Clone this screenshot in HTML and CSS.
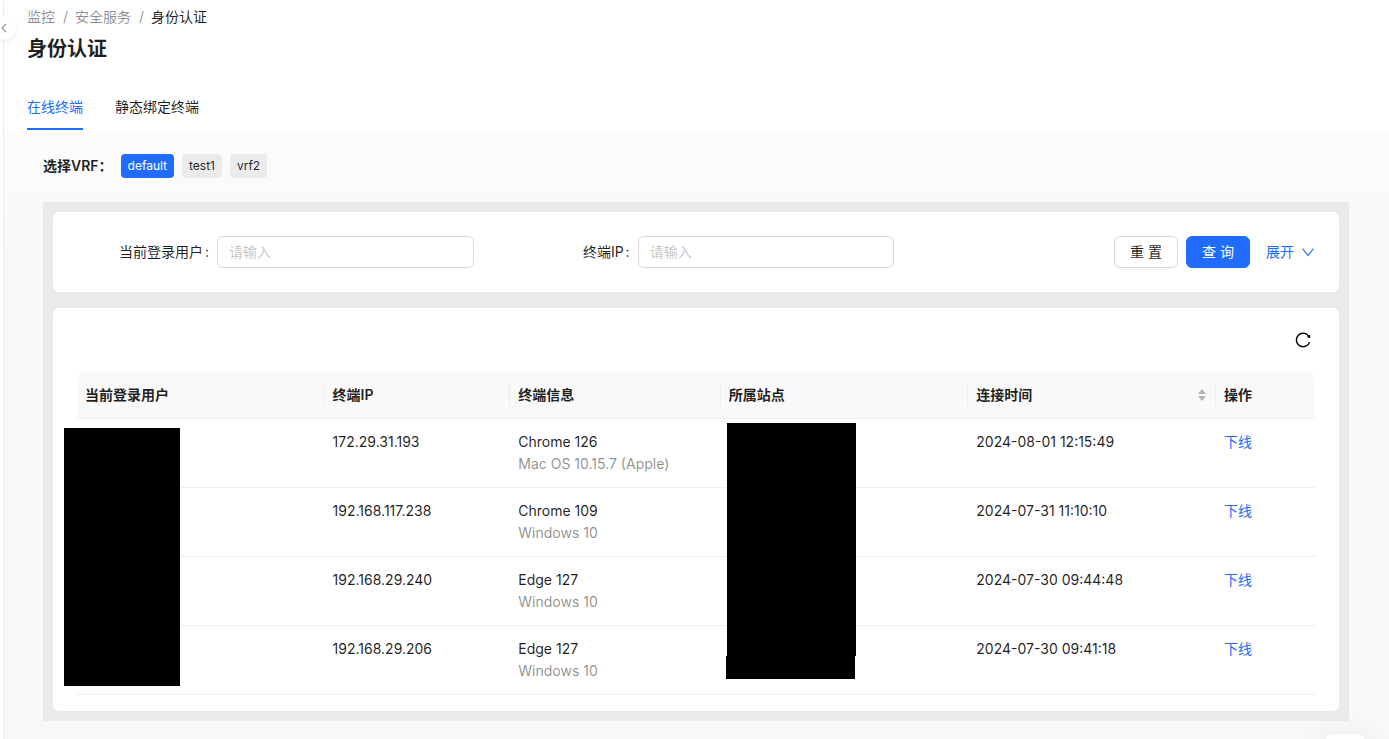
FILE: index.html
```
<!DOCTYPE html>
<html lang="zh-CN">
<head>
<meta charset="utf-8">
<title>身份认证</title>
<meta name="viewport" content="width=device-width, initial-scale=1">
<link rel="stylesheet" href="styles.css">
</head>
<body>
<div class="layout">
  <aside class="sider">
    <button class="sider-toggle" type="button" aria-label="展开菜单">
      <svg viewBox="0 0 12 12" width="12" height="12" aria-hidden="true"><path d="M8 2 4 6l4 4"/></svg>
    </button>
  </aside>
  <main class="main">
    <header class="page-header">
      <nav class="breadcrumb">
        <a href="#">监控</a><span class="sep">/</span><a href="#">安全服务</a><span class="sep">/</span><span class="current">身份认证</span>
      </nav>
      <h1 class="title">身份认证</h1>
      <div class="tabs" role="tablist">
        <button class="tab active" type="button" role="tab" aria-selected="true">在线终端</button>
        <button class="tab" type="button" role="tab" aria-selected="false">静态绑定终端</button>
      </div>
    </header>

    <section class="content">
      <div class="vrf">
        <span class="vrf-label">选择VRF：</span>
        <button class="tag checked" type="button">default</button>
        <button class="tag" type="button">test1</button>
        <button class="tag" type="button">vrf2</button>
      </div>

      <div class="panel">
        <form class="card search">
          <div class="field">
            <label for="user">当前登录用户</label>
            <input id="user" type="text" placeholder="请输入">
          </div>
          <div class="field">
            <label for="ip">终端IP</label>
            <input id="ip" type="text" placeholder="请输入">
          </div>
          <div class="actions">
            <button class="btn" type="reset">重 置</button>
            <button class="btn primary" type="button">查 询</button>
            <a class="expand" href="#">展开
              <svg viewBox="0 0 14 14" width="14" height="14" aria-hidden="true"><path d="M1.500 3.500 7 10.500l5.500-7"/></svg>
            </a>
          </div>
        </form>

        <div class="card list">
          <div class="toolbar">
            <button class="icon-btn" type="button" aria-label="刷新">
              <svg viewBox="0 0 1024 1024" width="18" height="18" aria-hidden="true"><path d="M909.100 209.300l-56.400 44.100C775.800 155.100 656.200 92 521.900 92 290 92 102.300 279.500 102 511.500 101.700 743.700 289.800 932 521.900 932c181.300 0 335.800-115 394.600-276.100 1.500-4.200-.7-8.900-4.900-10.300l-56.700-19.500a8 8 0 0 0-10.100 4.800c-1.800 5-3.800 10-5.900 14.900-17.300 41-42.100 77.800-73.700 109.400A344.770 344.770 0 0 1 655.900 829c-42.300 17.900-87.400 27-133.800 27-46.500 0-91.500-9.100-133.800-27A341.500 341.500 0 0 1 279 755.200a342.160 342.160 0 0 1-73.700-109.400c-17.900-42.400-27-87.400-27-133.900s9.100-91.500 27-133.900c17.300-41 42.100-77.800 73.700-109.400 31.600-31.600 68.400-56.400 109.300-73.800 42.300-17.900 87.400-27 133.800-27 46.500 0 91.500 9.100 133.800 27a341.500 341.500 0 0 1 109.300 73.800c9.900 9.900 19.200 20.400 27.800 31.400l-60.200 47a8 8 0 0 0 3 14.100l175.600 43c5 1.200 9.900-2.600 9.900-7.700l.8-180.900c-.1-6.600-7.800-10.300-13-6.200z"/></svg>
            </button>
          </div>
          <div class="table-wrap">
            <table class="table">
              <colgroup>
                <col class="c-20"><col class="c-15"><col class="c-17"><col class="c-20"><col class="c-20"><col class="c-8">
              </colgroup>
              <thead>
                <tr>
                  <th scope="col"><div class="th">当前登录用户</div></th>
                  <th scope="col"><div class="th">终端IP</div></th>
                  <th scope="col"><div class="th">终端信息</div></th>
                  <th scope="col"><div class="th">所属站点</div></th>
                  <th scope="col"><div class="th">连接时间
                    <svg class="sorter" viewBox="0 0 10 14" width="10" height="14" aria-hidden="true"><path d="M5 1 9 6H1zM5 13 1 8h8z"/></svg></div></th>
                  <th scope="col"><div class="th">操作</div></th>
                </tr>
              </thead>
              <tbody>
                <tr><td></td><td>172.29.31.193</td><td>Chrome 126<div class="sub">Mac OS 10.15.7 (Apple)</div></td><td></td><td>2024-08-01 12:15:49</td><td><a href="#">下线</a></td></tr>
                <tr><td></td><td>192.168.117.238</td><td>Chrome 109<div class="sub">Windows 10</div></td><td></td><td>2024-07-31 11:10:10</td><td><a href="#">下线</a></td></tr>
                <tr><td></td><td>192.168.29.240</td><td>Edge 127<div class="sub">Windows 10</div></td><td></td><td>2024-07-30 09:44:48</td><td><a href="#">下线</a></td></tr>
                <tr><td></td><td>192.168.29.206</td><td>Edge 127<div class="sub">Windows 10</div></td><td></td><td>2024-07-30 09:41:18</td><td><a href="#">下线</a></td></tr>
              </tbody>
            </table>
            <div class="mask mask-user"></div>
            <div class="mask mask-site"></div>
            <div class="mask mask-site-end"></div>
          </div>
        </div>
      </div>
    </section>
  </main>
</div>
<button class="float-btn" type="button" aria-label="帮助"></button>
</body>
</html>
```
FILE: styles.css
```
* { box-sizing: border-box; }

body {
  margin: 0;
  overflow-x: hidden;
  background: #f9f9f9;
  color: rgba(0, 0, 0, .88);
  font: 14px/22px Inter, "Noto Sans CJK SC", sans-serif;
}

button, input { font: inherit; color: inherit; }
button { cursor: pointer; }
a { color: #206cff; text-decoration: none; }
svg { display: block; }

.layout { display: flex; min-height: 100vh; }

.sider {
  position: relative;
  flex: none;
  width: 4px;
  background: #fff;
  border-right: 1px solid #eee;
}
.sider-toggle {
  position: absolute;
  top: 16px;
  right: -13px;
  width: 24px;
  height: 24px;
  padding: 6px;
  border: 0;
  border-radius: 50%;
  background: #fff;
  box-shadow: 0 2px 8px -2px rgba(0, 0, 0, .08), 0 1px 4px -1px rgba(25, 15, 15, .08);
}
.sider-toggle path { fill: none; stroke: #999; stroke-width: 1.3; }

.main { flex: 1; min-width: 0; background: linear-gradient(#fcfcfc 130px, #f8f8f8 260px); }

.page-header { padding: 6px 23px 0; background: #fff; }
.breadcrumb { display: flex; }
.breadcrumb a { color: rgba(0, 0, 0, .45); }
.sep { margin: 0 7px 0 8px; color: rgba(0, 0, 0, .45); }
.title { margin: 5px 0 0; font-size: 20px; line-height: 32px; font-weight: 600; }

.tabs { display: flex; gap: 32px; margin-top: 19px; }
.tab {
  padding: 12px 0 10px;
  border: 0;
  border-bottom: 2px solid transparent;
  background: none;
}
.tab.active { color: #206cff; border-color: #206cff; }

.content { padding: 24px 40px 18px 39px; }

.vrf { display: flex; align-items: center; gap: 8px; margin-bottom: 24px; }
.vrf-label { font-weight: 600; }
.tag {
  height: 24px;
  padding: 0 7px;
  border: 0;
  border-radius: 4px;
  background: #ebebeb;
  font-size: 12px;
}
.tag.checked { background: #206cff; color: #fff; }

.panel { display: grid; gap: 16px; padding: 10px; background: #eaeaea; }
.card { background: #fff; border-radius: 6px; }

.search {
  display: grid;
  grid-template-columns: repeat(3, 1fr);
  gap: 24px;
  padding: 24px;
}
.field { display: flex; align-items: center; }
.field label { flex: none; width: 140px; padding-right: 8px; text-align: right; }
.field label::after { content: ":"; margin-left: 2px; }
.field input {
  flex: 1;
  min-width: 0;
  height: 32px;
  padding: 3px 11px 5px;
  border: 1px solid #d9d9d9;
  border-radius: 6px;
  background: #fff;
}
.field input::placeholder { color: rgba(0, 0, 0, .25); }

.actions { display: flex; justify-content: flex-end; align-items: center; gap: 8px; }
.btn {
  width: 64px;
  height: 32px;
  padding: 0;
  border: 1px solid #d9d9d9;
  border-radius: 6px;
  background: #fff;
  box-shadow: 0 2px 0 rgba(0, 0, 0, .02);
}
.btn.primary { border-color: #206cff; background: #206cff; color: #fff; }
.expand { display: flex; align-items: center; gap: 7px; margin-left: 8px; }
.expand path { fill: none; stroke: currentColor; stroke-width: 1.2; }

.list { padding: 16px 24px; }
.toolbar { display: flex; justify-content: flex-end; align-items: center; height: 32px; margin-bottom: 16px; }
.icon-btn { padding: 0 3px; border: 0; background: none; }

.table-wrap { position: relative; }
.table { width: 100%; table-layout: fixed; border-collapse: separate; border-spacing: 0; }
.c-20 { width: 20%; }
.c-15 { width: 15%; }
.c-17 { width: 17%; }
.c-8 { width: 8%; }
.table th {
  padding: 12px 0;
  border-bottom: 1px solid #eee;
  background: #f9f9f9;
  text-align: left;
  font-weight: 600;
}
.table th:first-child { border-top-left-radius: 8px; }
.table th:last-child { border-top-right-radius: 8px; }
.th {
  display: flex;
  justify-content: space-between;
  align-items: center;
  padding: 0 8px;
  border-right: 1px solid #eee;
}
th:last-child .th { border-right-color: transparent; }
.sorter { fill: #b3b3b3; }
.table td { padding: 12px 8px; border-bottom: 1px solid #eee; vertical-align: top; }
.sub { color: rgba(0, 0, 0, .45); }

.mask { position: absolute; background: #000; }
.mask-user { top: 56px; left: -13px; width: 116px; height: 258px; }
.mask-site { top: 51px; left: calc(52% + 6px); width: 129px; height: 233px; }
.mask-site-end { top: 284px; left: calc(52% + 5px); width: 129px; height: 23px; }

.float-btn {
  position: fixed;
  right: 24px;
  bottom: -35px;
  width: 40px;
  height: 40px;
  border: 0;
  border-radius: 8px;
  background: #fff;
  box-shadow: 0 6px 16px rgba(0, 0, 0, .08), 0 3px 6px -4px rgba(0, 0, 0, .12), 0 9px 28px 8px rgba(0, 0, 0, .05);
}
```
